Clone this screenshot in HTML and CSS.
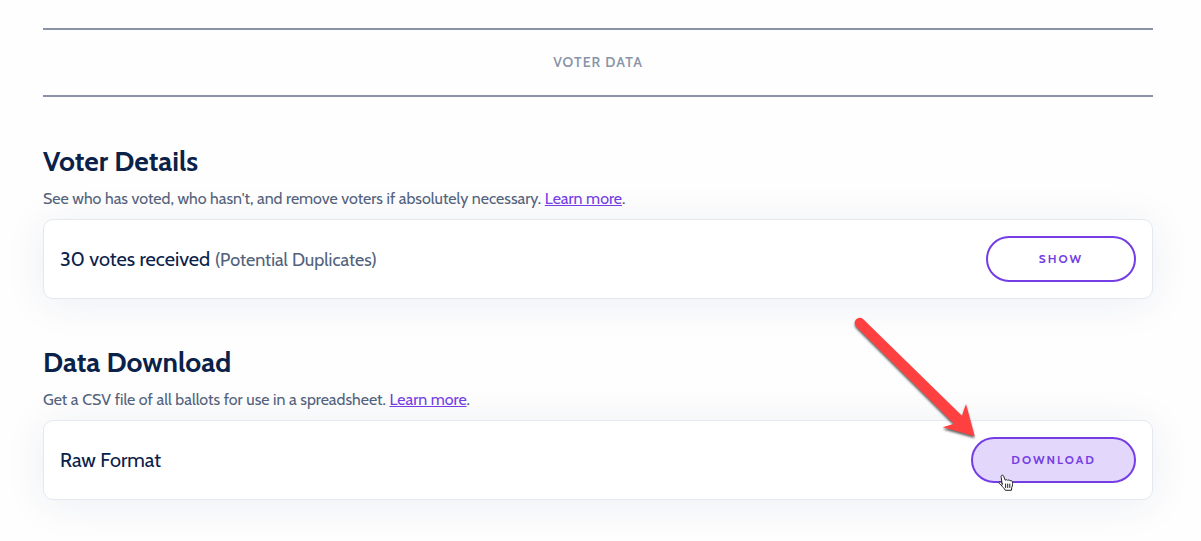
FILE: index.html
```
<!DOCTYPE html>
<html lang="en">
  <head>
    <meta charset="UTF-8" />
    <meta name="viewport" content="width=device-width, initial-scale=1.0" />
    <title>Voter Data</title>
    <link rel="stylesheet" href="styles.css">
  </head>
  <body>
    <main class="page">
      <div class="divider">Voter Data</div>

      <section class="section">
        <h2>Voter Details</h2>
        <p class="description">
          See who has voted, who hasn't, and remove voters if absolutely necessary. <a href="#voters">Learn more</a>.
        </p>
        <div class="card">
          <div class="card-title">30 votes received <span class="note">(Potential Duplicates)</span></div>
          <button type="button" class="button">Show</button>
        </div>
      </section>

      <section class="section">
        <h2>Data Download</h2>
        <p class="description">
          Get a CSV file of all ballots for use in a spreadsheet. <a href="#download">Learn more</a>.
        </p>
        <div class="card">
          <div class="card-title">Raw Format</div>
          <div class="action">
            <button type="button" class="button active">Download</button>
            <svg class="arrow" viewBox="0 0 140 140" aria-hidden="true">
              <path d="M13.3 7.2 L112 103.7 L116 92 L124.7 124.3 L92.7 115.3 L104 111.7 L6.2 14.4 A5 5 0 0 1 13.3 7.2 Z" fill="#ff4040" />
            </svg>
            <svg class="pointer" viewBox="0 0 16 18" aria-hidden="true">
              <path d="M4.2 10.8 L3.2 3.2 C2.7 1.2 4.8 .3 5.6 2.1 L7.3 6.3 C8 5.3 9.2 5.5 9.7 6.4 C10.4 5.6 11.7 5.9 12 6.9 C13 6.2 14.4 6.8 14.5 8.1 C14.7 10 14.6 11.7 13.8 13.3 L13.4 16.3 L7.3 16.3 C6.5 14.3 4.4 12.9 2.9 10.8 L1.4 9.6 C.4 8.2 1.7 7.1 3 8.1 L4.3 9.4" fill="#fff" stroke="#222" stroke-linecap="round" stroke-linejoin="round" />
              <path d="M7.6 10 V13.5 M9.7 10 V13.5 M11.8 10 V13.5" fill="none" stroke="#222" stroke-linecap="round" />
            </svg>
          </div>
        </div>
      </section>
    </main>
  </body>
</html>
```
FILE: styles.css
```
* {
  box-sizing: border-box;
}

body {
  font-family: Cabin, Lato, sans-serif;
  font-size: 16px;
  line-height: 24px;
  color: #0a2149;
  background: #fefefe;
  margin: 0;
}

.page {
  padding: 28px 48px 40px 43px;
}

.divider {
  border-top: 2px solid #8a94a9;
  border-bottom: 2px solid #8a94a9;
  padding: 20px 0 21px;
  margin-bottom: 48px;
  color: #8a94a9;
  font-size: 14px;
  font-weight: 600;
  letter-spacing: 1px;
  text-align: center;
  text-transform: uppercase;
}

.section {
  margin-top: 47px;
}

h2 {
  font-size: 28px;
  line-height: 32px;
  font-weight: bold;
  margin: 0 0 10px;
}

.description {
  color: #53627c;
  margin: 0 0 8px;
}

.description a {
  color: #743ee4;
}

.card {
  display: flex;
  justify-content: space-between;
  align-items: center;
  padding: 16px;
  background: white;
  border: 1px solid #e6e8ef;
  border-radius: 10px;
  box-shadow: 0 4px 40px rgba(20, 50, 110, 0.08);
}

.card-title {
  font-size: 20px;
}

.note {
  color: #53627c;
  font-size: 18px;
}

.button {
  min-width: 150px;
  padding: 11px 38px;
  font-family: inherit;
  font-size: 12px;
  line-height: 20px;
  font-weight: bold;
  letter-spacing: 2px;
  text-transform: uppercase;
  color: #743ee4;
  background: white;
  border: 2px solid #743ee4;
  border-radius: 23px;
  cursor: pointer;
}

.button:hover,
.button.active {
  background: #e3d8fb;
}

.action {
  position: relative;
  display: flex;
}

/* Overlays on the download button */
.arrow {
  position: absolute;
  top: -125px;
  left: -121px;
  width: 140px;
  height: 140px;
  filter: drop-shadow(0 2px 1px rgba(0, 0, 0, 0.6));
  pointer-events: none;
}

.pointer {
  position: absolute;
  top: 37px;
  left: 27px;
  width: 16px;
  height: 18px;
  pointer-events: none;
}
```
